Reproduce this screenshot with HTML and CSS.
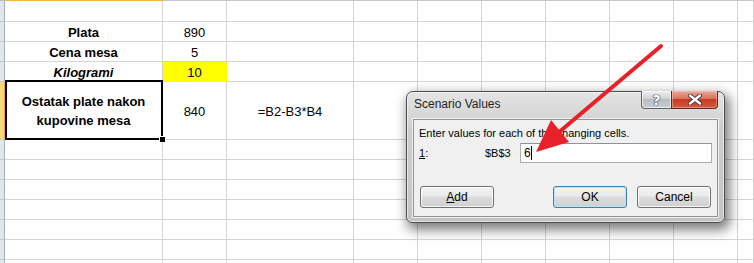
FILE: index.html
```html
<!DOCTYPE html>
<html>
<head>
<meta charset="utf-8" />
<title>Scenario Values</title>
<link rel="stylesheet" href="styles.css">
</head>
<body>
	<div class="sheet">
		<div class="colhead"><span class="hd"></span><span class="hd_sel"></span><span class="hd_rest"></span></div>

		<div class="row r1">
			<div class="rh"></div><div class="c a"></div><div class="c b"></div><div class="c cc"></div>
			<div class="c"></div><div class="c"></div><div class="c"></div><div class="c"></div><div class="c"></div><div class="c"></div><div class="c j"></div>
		</div>
		<div class="row">
			<div class="rh"></div><div class="c a t">Plata</div><div class="c b">890</div><div class="c cc"></div>
			<div class="c"></div><div class="c"></div><div class="c"></div><div class="c"></div><div class="c"></div><div class="c"></div><div class="c j"></div>
		</div>
		<div class="row">
			<div class="rh"></div><div class="c a t">Cena mesa</div><div class="c b">5</div><div class="c cc"></div>
			<div class="c"></div><div class="c"></div><div class="c"></div><div class="c"></div><div class="c"></div><div class="c"></div><div class="c j"></div>
		</div>
		<div class="row">
			<div class="rh"></div><div class="c a t it">Kilogrami</div><div class="c b fill">10</div><div class="c cc"></div>
			<div class="c"></div><div class="c"></div><div class="c"></div><div class="c"></div><div class="c"></div><div class="c"></div><div class="c j"></div>
		</div>
		<div class="row r5">
			<div class="rh"></div><div class="c a t active">Ostatak plate nakon<br>kupovine mesa</div><div class="c b">840</div><div class="c cc">=B2-B3*B4</div>
			<div class="c"></div><div class="c"></div><div class="c"></div><div class="c"></div><div class="c"></div><div class="c"></div><div class="c j"></div>
		</div>
		<div class="row">
			<div class="rh"></div><div class="c a"></div><div class="c b"></div><div class="c cc"></div>
			<div class="c"></div><div class="c"></div><div class="c"></div><div class="c"></div><div class="c"></div><div class="c"></div><div class="c j"></div>
		</div>
		<div class="row">
			<div class="rh"></div><div class="c a"></div><div class="c b"></div><div class="c cc"></div>
			<div class="c"></div><div class="c"></div><div class="c"></div><div class="c"></div><div class="c"></div><div class="c"></div><div class="c j"></div>
		</div>
		<div class="row">
			<div class="rh"></div><div class="c a"></div><div class="c b"></div><div class="c cc"></div>
			<div class="c"></div><div class="c"></div><div class="c"></div><div class="c"></div><div class="c"></div><div class="c"></div><div class="c j"></div>
		</div>
		<div class="row">
			<div class="rh"></div><div class="c a"></div><div class="c b"></div><div class="c cc"></div>
			<div class="c"></div><div class="c"></div><div class="c"></div><div class="c"></div><div class="c"></div><div class="c"></div><div class="c j"></div>
		</div>
		<div class="row">
			<div class="rh"></div><div class="c a"></div><div class="c b"></div><div class="c cc"></div>
			<div class="c"></div><div class="c"></div><div class="c"></div><div class="c"></div><div class="c"></div><div class="c"></div><div class="c j"></div>
		</div>
		<div class="row">
			<div class="rh"></div><div class="c a"></div><div class="c b"></div><div class="c cc"></div>
			<div class="c"></div><div class="c"></div><div class="c"></div><div class="c"></div><div class="c"></div><div class="c"></div><div class="c j"></div>
		</div>
		<div class="row">
			<div class="rh"></div><div class="c a"></div><div class="c b"></div><div class="c cc"></div>
			<div class="c"></div><div class="c"></div><div class="c"></div><div class="c"></div><div class="c"></div><div class="c"></div><div class="c j"></div>
		</div>
	</div>

	<!-- dialog -->
	<div class="dlg">
		<div class="titlebar">
			<span class="dlg_title">Scenario Values</span>
			<div class="capbtns">
				<span class="cap_help">?</span>
				<span class="cap_close">
					<svg width="16" height="11" viewBox="0 0 16 11">
						<path d="M3 1.5 L13 9.5 M13 1.5 L3 9.5" stroke="#3a3a3a" stroke-width="4.2" stroke-linecap="round" fill="none"/>
						<path d="M3 1.5 L13 9.5 M13 1.5 L3 9.5" stroke="#fff" stroke-width="2.4" stroke-linecap="round" fill="none"/>
					</svg>
				</span>
			</div>
		</div>
		<div class="client">
			<p class="hint">Enter values for each of the changing cells.</p>
			<div class="field">
				<span class="fld_num"><u>1</u>:</span>
				<span class="fld_ref">$B$3</span>
				<span class="fld_input">6<i class="caret"></i></span>
			</div>
			<div class="btns">
				<a class="btn"><u>A</u>dd</a>
				<a class="btn btn_def">OK</a>
				<a class="btn">Cancel</a>
			</div>
		</div>
	</div>

	<svg class="arrow" width="754" height="263" viewBox="0 0 754 263">
		<line x1="661" y1="46" x2="558" y2="133" stroke="#e8202a" stroke-width="4" stroke-linecap="round"/>
		<polygon points="536,152 551,120 569,142" fill="#e8202a"/>
	</svg>
</body>
</html>
```

FILE: styles.css
```css
html, body {
	margin: 0;
	padding: 0;
}

body {
	width: 754px;
	height: 263px;
	overflow: hidden;
	position: relative;
	background: #fff;
	font-family: "Liberation Sans", Arial, sans-serif;
}

/* sheet grid */
.sheet {
	height: 263px;
	overflow: hidden;
}
.colhead {
	display: flex;
	height: 1px;
}
.colhead .hd {
	width: 5px;
	background: #b9bfc7;
}
.colhead .hd_sel {
	width: 158px;
	background: #f2b33d;
}
.colhead .hd_rest {
	flex: 1;
	background: #c3c8ce;
}

.row {
	display: flex;
	height: 20px;
}
.row.r1 {
	height: 21px;
}
.row.r5 {
	height: 58px;
}

.rh {
	width: 5px;
	flex: none;
	box-sizing: border-box;
	background: #e2e6eb;
	border-right: 1px solid #a6adb5;
	border-bottom: 1px solid #c3c8ce;
}
.r5 .rh {
	background: #f9d67a;
	border-right-color: #e2a73c;
}

.c {
	width: 64px;
	flex: none;
	box-sizing: border-box;
	border-right: 1px solid #d4d4d4;
	border-bottom: 1px solid #d4d4d4;
	display: flex;
	align-items: center;
	justify-content: center;
	text-align: center;
	font-size: 13px;
	line-height: 19px;
	padding-top: 1px;
	color: #000;
}
.c.a {
	width: 158px;
}
.c.cc {
	width: 127px;
}
.c.j {
	flex: 1;
}
.c.t {
	font-weight: bold;
}
.c.it {
	font-style: italic;
}
.c.fill {
	background: #ffff00;
	border-color: #ffff00;
}

/* selected cell */
.c.active {
	position: relative;
}
.c.active:after {
	content: '';
	position: absolute;
	top: -2px;
	left: 0;
	right: -1px;
	bottom: -1px;
	border: 2px solid #000;
}
.c.active:before {
	content: '';
	position: absolute;
	left: 155px;
	top: 55px;
	width: 5px;
	height: 5px;
	background: #000;
	box-shadow: 0 0 0 1px #fff;
	z-index: 1;
}

/* dialog */
.dlg {
	position: absolute;
	left: 406px;
	top: 91px;
	width: 319px;
	height: 132px;
	box-sizing: border-box;
	border: 1px solid #4d4d4d;
	border-radius: 7px 7px 6px 6px;
	background: linear-gradient(#e4e4e4, #cdcdcd 30%, #c4c4c4);
	box-shadow: inset 0 0 0 1px rgba(255,255,255,.55), 3px 5px 12px 2px rgba(0,0,0,.5);
	display: flex;
	flex-direction: column;
	font-size: 11px;
	color: #000;
}

.titlebar {
	height: 27px;
	display: flex;
	align-items: flex-start;
}
.dlg_title {
	padding: 5px 0 0 7px;
	font-size: 12px;
	line-height: 15px;
	color: #1e1e1e;
}
.capbtns {
	margin-left: auto;
	margin-right: 6px;
	margin-top: -1px;
	display: flex;
}
.cap_help, .cap_close {
	height: 18px;
	box-sizing: border-box;
	display: flex;
	align-items: center;
	justify-content: center;
	border: 1px solid #5f6368;
	border-top: none;
}
.cap_help {
	width: 30px;
	border-right: none;
	border-radius: 0 0 0 4px;
	background: linear-gradient(#eceef0, #d0d3d6 45%, #b9bcc0 50%, #c9ccd0);
	box-shadow: inset 0 0 0 1px rgba(255,255,255,.6);
	color: #fff;
	font-family: "DejaVu Sans", sans-serif;
	font-weight: bold;
	font-size: 14px;
	text-shadow: 0 0 1px #333, 0 0 1px #333, 0 0 1px #333;
}
.cap_close {
	width: 47px;
	border-color: #5a2a22;
	border-radius: 0 0 4px 0;
	background: linear-gradient(#eaa999, #d8725c 45%, #c43b21 50%, #d35a40);
	box-shadow: inset 0 0 0 1px rgba(255,210,200,.45);
}

.client {
	flex: 1;
	margin: 0 6px 5px 6px;
	background: #f0f0f0;
	border: 1px solid #939393;
	box-shadow: 0 0 0 1px rgba(255,255,255,.7);
	padding: 6px 5px 0 5px;
}

.hint {
	margin: 0;
	line-height: 14px;
}

.field {
	margin-top: 3px;
	height: 20px;
	display: flex;
	align-items: center;
}
.fld_num {
	width: 66px;
}
.fld_ref {
	width: 35px;
}
.fld_input {
	width: 192px;
	height: 20px;
	box-sizing: border-box;
	border: 1px solid #abadb3;
	border-top-color: #8e9198;
	background: #fff;
	padding-left: 3px;
	display: flex;
	align-items: center;
	font-size: 12px;
}
.caret {
	display: inline-block;
	width: 1px;
	height: 14px;
	background: #000;
}

.btns {
	margin-top: 23px;
	padding: 0 1px;
	display: flex;
	gap: 10px;
}
.btn {
	width: 74px;
	height: 22px;
	box-sizing: border-box;
	border: 1px solid #707070;
	border-radius: 3px;
	background: linear-gradient(#f2f2f2, #ebebeb 45%, #dddddd 50%, #cfcfcf);
	box-shadow: inset 0 0 0 1px rgba(255,255,255,.8);
	display: flex;
	align-items: center;
	justify-content: center;
	font-size: 12px;
	cursor: pointer;
}
.btn_def {
	margin-left: auto;
	border-color: #3c7fb1;
	box-shadow: inset 0 0 0 1px #b9e4f9;
}

.arrow {
	position: absolute;
	left: 0;
	top: 0;
	pointer-events: none;
}
```
